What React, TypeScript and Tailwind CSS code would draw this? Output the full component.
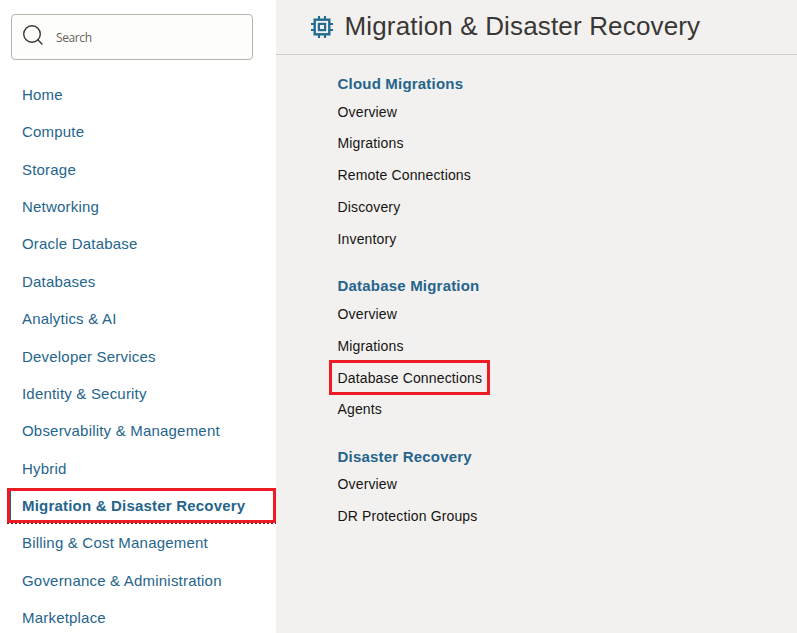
const navItems: string[] = [
  'Home',
  'Compute',
  'Storage',
  'Networking',
  'Oracle Database',
  'Databases',
  'Analytics & AI',
  'Developer Services',
  'Identity & Security',
  'Observability & Management',
  'Hybrid',
  'Migration & Disaster Recovery',
  'Billing & Cost Management',
  'Governance & Administration',
  'Marketplace',
];

const activeItem = 'Migration & Disaster Recovery';
const highlightedLink = 'Database Connections';

const sections: { title: string; links: string[] }[] = [
  {
    title: 'Cloud Migrations',
    links: ['Overview', 'Migrations', 'Remote Connections', 'Discovery', 'Inventory'],
  },
  {
    title: 'Database Migration',
    links: ['Overview', 'Migrations', 'Database Connections', 'Agents'],
  },
  { title: 'Disaster Recovery', links: ['Overview', 'DR Protection Groups'] },
];

function SearchIcon() {
  return (
    <svg width="22" height="22" viewBox="0 0 22 22" fill="none" stroke="#3a3632" strokeWidth="1.4">
      <circle cx="9" cy="10" r="8.3" />
      <path d="M14.6 15.6 L19.4 20.4" />
    </svg>
  );
}

function ChipIcon() {
  return (
    <svg width="22" height="22" viewBox="0 0 22 22" fill="none" stroke="#236b91" className="shrink-0">
      <rect x="3.7" y="3.7" width="14.6" height="14.6" strokeWidth="2.4" />
      <rect x="7.9" y="7.9" width="6.2" height="6.2" strokeWidth="2.2" />
      <path
        d="M8 0V3M14 0V3M8 19V22M14 19V22M0 8H3M0 14H3M19 8H22M19 14H22"
        strokeWidth="2.1"
      />
    </svg>
  );
}

function Sidebar() {
  return (
    <aside className="w-[276px] shrink-0 bg-white pt-[14px]">
      <div className="ml-[11px] flex h-[46px] w-[242px] items-center rounded-[4px] border border-[#b8b3ad] bg-[#fdfdfb] pl-[11px]">
        <div className="-mt-[4px]">
          <SearchIcon />
        </div>
        <span className="mt-[2px] ml-[11px] font-['Open_Sans','Noto_Sans',sans-serif] text-[12px] tracking-[-0.4px] text-[#67625c]">
          Search
        </span>
      </div>
      <nav className="mt-[16.58px] text-[15px] tracking-[0.2px] text-[#25658c]">
        {navItems.map((item) => (
          <div key={item} className="relative flex h-[37.36px] items-center pl-[22px] whitespace-nowrap">
            {item === activeItem ? (
              <>
                <span className="font-bold">{item}</span>
                <div className="absolute top-[0.45px] left-[7px] h-[35px] w-[269px] border-[3px] border-[#ed1c24]">
                  <div className="h-full w-px bg-[#236188]" />
                </div>
                <div className="absolute top-[35.45px] left-[7px] h-px w-[269px] bg-[repeating-linear-gradient(90deg,#5a1518_0_2px,#ffffff_2px_4px)]" />
              </>
            ) : (
              <span>{item}</span>
            )}
          </div>
        ))}
      </nav>
    </aside>
  );
}

export default function App() {
  return (
    <div className="flex h-[633px] w-[797px] overflow-hidden bg-white font-['Liberation_Sans',Arial,sans-serif]">
      <Sidebar />
      <main className="flex-1 bg-[#f2f1ef]">
        <header className="flex h-[55px] items-center gap-[11.5px] border-b border-[#ceccca] pl-[35px] text-[#393735]">
          <ChipIcon />
          <h1 className="-mt-[2px] text-[26px] leading-[36px] tracking-[0.16px] whitespace-nowrap">
            Migration &amp; Disaster Recovery
          </h1>
        </header>
        <div className="flex flex-col gap-[19.25px] pt-[17px] pl-[61.5px]">
          {sections.map((section) => (
            <section key={section.title}>
              <h2 className="flex h-[24.25px] items-center text-[15px] font-bold tracking-[0.2px] text-[#25658c]">
                {section.title}
              </h2>
              <ul className="text-[14px] tracking-[0.15px] text-[#161513]">
                {section.links.map((link) => (
                  <li key={link} className="flex h-[31.75px] items-center">
                    {link === highlightedLink ? (
                      <span className="relative mt-[0.5px]">
                        {link}
                        <span className="absolute -top-[7.25px] -left-[8.5px] h-[35px] w-[161px] border-[3px] border-[#ed1c24]" />
                      </span>
                    ) : (
                      <span>{link}</span>
                    )}
                  </li>
                ))}
              </ul>
            </section>
          ))}
        </div>
      </main>
    </div>
  );
}
